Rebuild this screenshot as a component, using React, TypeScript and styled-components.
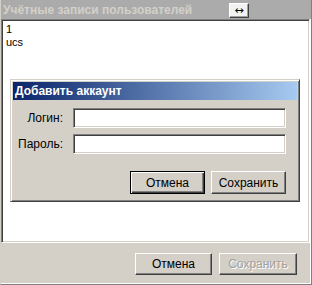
import React from "react";
import styled, { createGlobalStyle, css } from "styled-components";

const Global = createGlobalStyle`
  html, body { margin: 0; padding: 0; background: #d4d0c8; }
  * { box-sizing: border-box; }
  body { font-family: "Liberation Sans", Arial, sans-serif; font-size: 11px; }
`;

const Window = styled.div`
  width: 312px;
  height: 285px;
  background: #d4d0c8;
  display: flex;
  flex-direction: column;
  border-left: 1px solid #d4d0c8;
  border-right: 1px solid #808080;
  border-bottom: 1px solid #808080;
  box-shadow: inset 0 -1px 0 #ffffff, inset -1px 0 0 #ffffff;
`;

const TitleBar = styled.div`
  height: 19px;
  flex: none;
  background: #ababab;
  display: flex;
  align-items: center;
  padding-left: 2px;
`;

const TitleText = styled.div`
  font-weight: bold;
  font-size: 12px;
  color: #d4d0c8;
  width: 226px;
  white-space: nowrap;
`;

const SwapButton = styled.div`
  width: 20px;
  height: 15px;
  margin-top: 1px;
  background: #f2f2f2;
  border-top: 1px solid #ffffff;
  border-left: 1px solid #ffffff;
  border-right: 1px solid #404040;
  border-bottom: 1px solid #404040;
  box-shadow: inset -1px -1px 0 #a0a0a0;
  display: flex;
  align-items: center;
  justify-content: center;
  font-family: "DejaVu Sans", sans-serif;
  font-size: 11px;
  color: #000;
  line-height: 1;
`;

const ListBox = styled.div`
  position: relative;
  height: 224px;
  flex: none;
  margin: 0 1px 0 0;
  background: #ffffff;
  border-top: 1px solid #808080;
  border-left: 1px solid #808080;
  border-right: 1px solid #ffffff;
  border-bottom: 1px solid #ffffff;
  box-shadow: inset 1px 1px 0 #404040, inset -1px -1px 0 #d4d0c8;
  padding: 3px 4px;
`;

const ListItem = styled.div`
  font-size: 11px;
  line-height: 13px;
  color: #000;
`;

const Dialog = styled.div`
  position: absolute;
  left: 8px;
  top: 59px;
  width: 290px;
  height: 123px;
  background: #d4d0c8;
  border-top: 1px solid #d4d0c8;
  border-left: 1px solid #d4d0c8;
  border-right: 1px solid #404040;
  border-bottom: 1px solid #404040;
  box-shadow: inset 1px 1px 0 #ffffff, inset -1px -1px 0 #808080;
  padding: 2px;
  display: flex;
  flex-direction: column;
`;

const DialogTitle = styled.div`
  height: 18px;
  background: linear-gradient(to right, #0a246a, #a6caf0);
  color: #ffffff;
  font-weight: bold;
  font-size: 12px;
  display: flex;
  align-items: center;
  padding-left: 2px;
`;

const Form = styled.div`
  display: grid;
  grid-template-columns: 50px 213px;
  column-gap: 10px;
  row-gap: 6px;
  margin-top: 8px;
  align-items: center;
`;

const Label = styled.div`
  text-align: right;
  font-size: 12px;
  color: #000;
  white-space: nowrap;
`;

const Input = styled.div`
  height: 20px;
  background: #ffffff;
  border-top: 1px solid #808080;
  border-left: 1px solid #808080;
  border-right: 1px solid #ffffff;
  border-bottom: 1px solid #ffffff;
  box-shadow: inset 1px 1px 0 #404040, inset -1px -1px 0 #d4d0c8;
`;

const ButtonRow = styled.div<{ $gap: number; $top: number; $right: number }>`
  display: flex;
  justify-content: flex-end;
  gap: ${(p) => p.$gap}px;
  margin-top: ${(p) => p.$top}px;
  padding-right: ${(p) => p.$right}px;
`;

const Button = styled.div<{ $w: number; $h: number; $default?: boolean; $disabled?: boolean }>`
  width: ${(p) => p.$w}px;
  height: ${(p) => p.$h}px;
  display: flex;
  align-items: center;
  justify-content: center;
  font-size: 12px;
  background: #d4d0c8;
  color: ${(p) => (p.$disabled ? "#a0a0a0" : "#000")};
  text-shadow: ${(p) => (p.$disabled ? "1px 1px 0 #ffffff" : "none")};
  ${(p) =>
    p.$default
      ? css`
          border: 1px solid #000000;
          box-shadow: inset 1px 1px 0 #ffffff, inset -1px -1px 0 #404040,
            inset -2px -2px 0 #808080;
        `
      : css`
          border-top: 1px solid #ffffff;
          border-left: 1px solid #ffffff;
          border-right: 1px solid #404040;
          border-bottom: 1px solid #404040;
          box-shadow: inset -1px -1px 0 #808080;
        `}
`;

export default function App() {
  return (
    <>
      <Global />
      <Window>
        <TitleBar>
          <TitleText>Учётные записи пользователей</TitleText>
          <SwapButton>↔</SwapButton>
        </TitleBar>
        <ListBox>
          <ListItem>1</ListItem>
          <ListItem>ucs</ListItem>
          <Dialog>
            <DialogTitle>Добавить аккаунт</DialogTitle>
            <Form>
              <Label>Логин:</Label>
              <Input />
              <Label>Пароль:</Label>
              <Input />
            </Form>
            <ButtonRow $gap={6} $top={17} $right={11}>
              <Button $w={75} $h={23} $default>
                Отмена
              </Button>
              <Button $w={75} $h={23}>
                Сохранить
              </Button>
            </ButtonRow>
          </Dialog>
        </ListBox>
        <ButtonRow $gap={7} $top={10} $right={14}>
          <Button $w={77} $h={22}>
            Отмена
          </Button>
          <Button $w={78} $h={22} $disabled>
            Сохранить
          </Button>
        </ButtonRow>
      </Window>
    </>
  );
}
